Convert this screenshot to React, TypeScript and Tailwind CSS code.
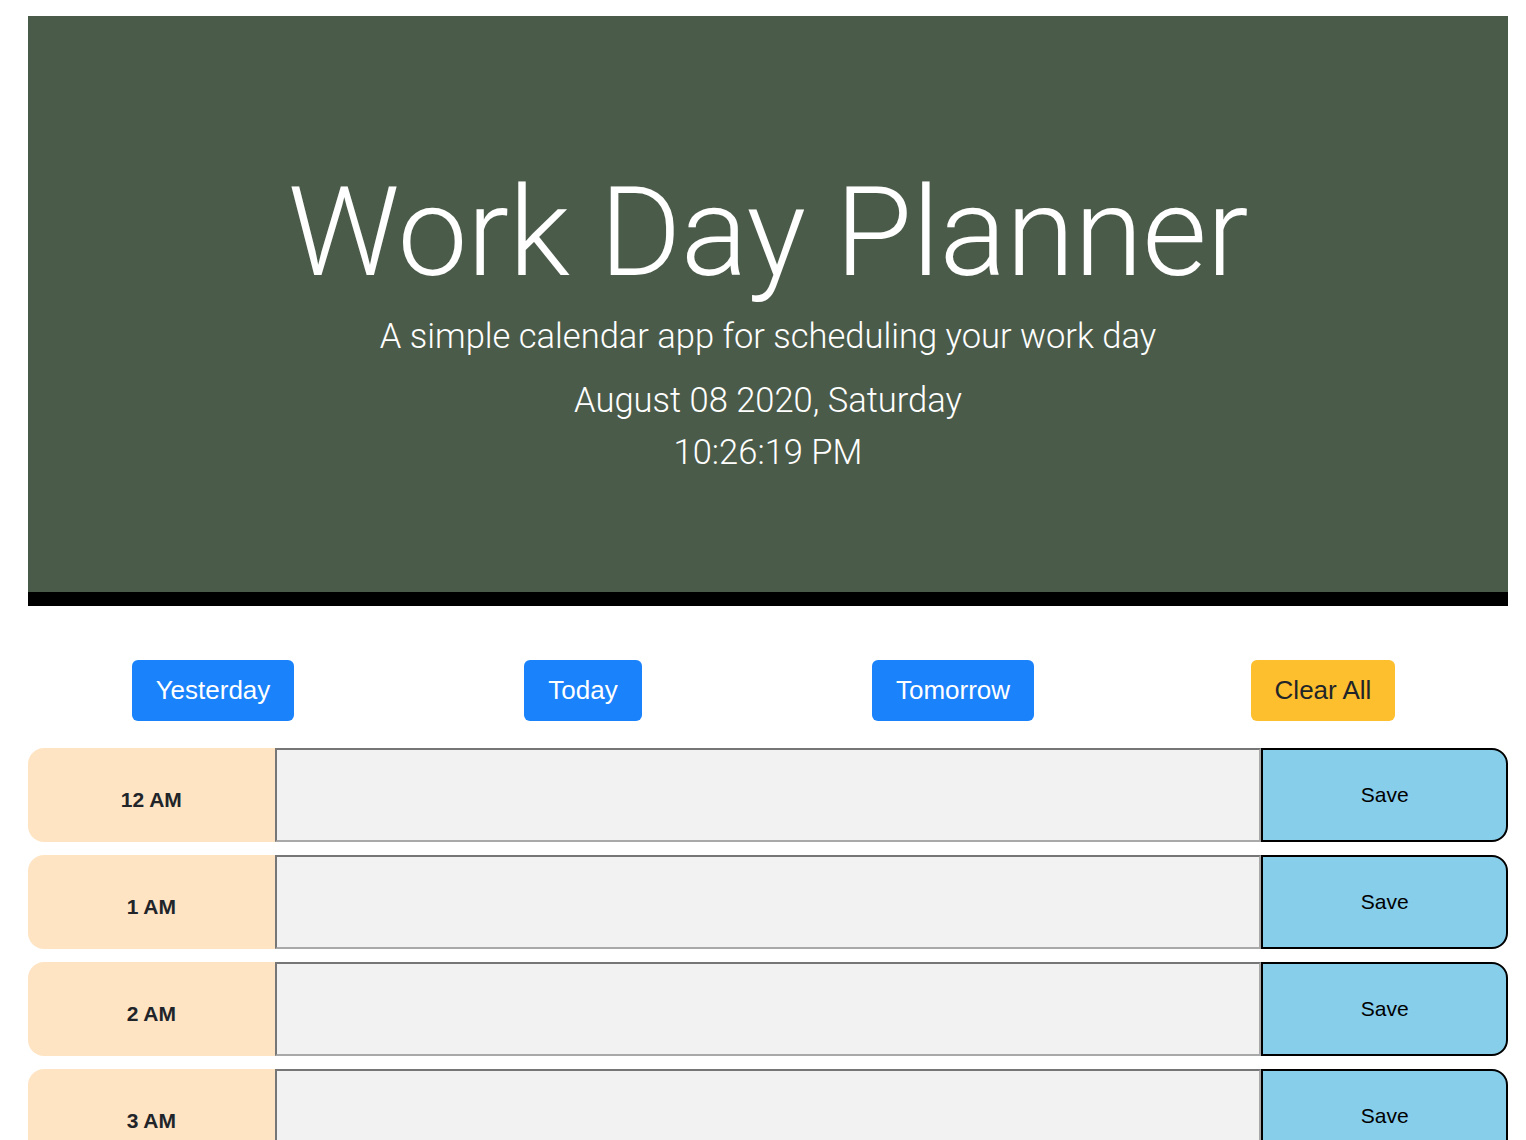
import React from 'react';

const hours = ['12 AM', '1 AM', '2 AM', '3 AM'];

const navButtons = [
  { label: 'Yesterday', cls: 'bg-[#1a82fb] text-white' },
  { label: 'Today', cls: 'bg-[#1a82fb] text-white' },
  { label: 'Tomorrow', cls: 'bg-[#1a82fb] text-white' },
  { label: 'Clear All', cls: 'bg-[#fdbf2d] text-[#212529]' },
];

const App: React.FC = () => {
  return (
    <div className="min-h-screen bg-white pt-[16px] font-['Liberation_Sans',Arial,sans-serif]">
      <div className="ml-[28px] w-[1480px]">
        <header className="flex h-[590px] flex-col items-center border-b-[14px] border-black bg-[#4b5b4a] pt-[147px] font-['Roboto',sans-serif] font-light text-white">
          <h1 className="text-[125px] leading-[140px] tracking-[-0.5px]">Work Day Planner</h1>
          <p className="mt-[13px] text-[34.5px] leading-[40px]">A simple calendar app for scheduling your work day</p>
          <p className="mt-[24px] text-[34.5px] leading-[40px]">August 08 2020, Saturday</p>
          <p className="mt-[12px] text-[34.5px] leading-[40px]">10:26:19 PM</p>
        </header>

        <div className="mt-[54px] grid grid-cols-4">
          {navButtons.map((b) => (
            <div key={b.label} className="flex justify-center">
              <button className={`h-[61px] rounded-[6px] px-[24px] text-[26px] ${b.cls}`}>{b.label}</button>
            </div>
          ))}
        </div>

        <div className="mt-[27px] flex flex-col gap-[13px]">
          {hours.map((h) => (
            <div key={h} className="grid h-[94px] grid-cols-12">
              <div className="col-span-2 flex items-center justify-center rounded-l-[16px] bg-[#ffe4c4] pt-[10px] text-[21px] font-bold text-[#212529]">
                {h}
              </div>
              <textarea className="col-span-8 resize-none border-2 border-t-[#767676] border-l-[#767676] border-b-[#a9a9a9] border-r-[#a9a9a9] bg-[#f2f2f2] outline-none" />
              <button className="col-span-2 rounded-r-[16px] border-2 border-black bg-[#87ceeb] text-[21px] text-black">
                Save
              </button>
            </div>
          ))}
        </div>
      </div>
    </div>
  );
};

export default App;
